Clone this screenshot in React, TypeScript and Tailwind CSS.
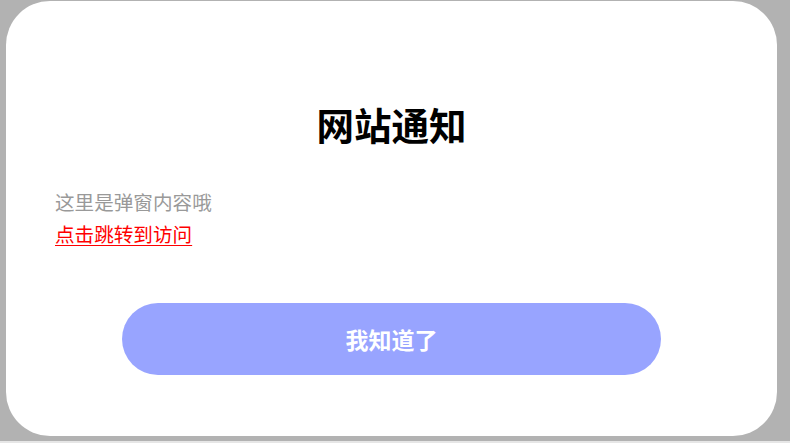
import React from 'react';

export default function App() {
  return (
    <div className="w-[790px] h-[443px] bg-[#b2b2b2] flex flex-col overflow-hidden font-['Noto_Sans_CJK_SC','Noto_Sans',sans-serif]">
      <div className="flex-1 pl-[6px] pt-[1px]">
        {/* Dialog card */}
        <div className="w-[771px] h-[435px] bg-white rounded-[44px] flex flex-col pt-[104px] px-[49px]">
          <h1 className="text-center text-[37.5px] leading-[38px] font-bold text-black">网站通知</h1>

          <div className="mt-[43px] text-[19.6px] leading-[32px]">
            <p className="text-[#999999]">这里是弹窗内容哦</p>
            <a href="#" className="text-[#ff0000] underline underline-offset-[3px]">点击跳转到访问</a>
          </div>

          <button className="mt-[53px] mx-auto w-[539px] h-[72px] rounded-full bg-[#98a4ff] text-white text-[23px] font-bold">
            我知道了
          </button>
        </div>
      </div>
      <div className="h-[2px] bg-[#e6e6e6]" />
    </div>
  );
}
